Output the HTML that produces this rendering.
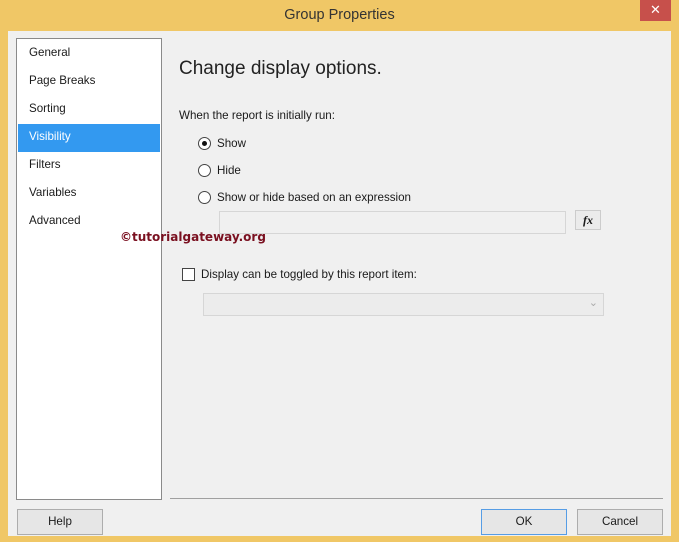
<!DOCTYPE html><html><head><style>
body{margin:0;width:679px;height:542px;background:#f0c766;font-family:"Liberation Sans",sans-serif;position:relative;overflow:hidden;font-size:11.6px;color:#1a1a1a}
div{position:absolute;box-sizing:border-box}
.t{white-space:nowrap}
.btn{background:#e6e6e6;border:1px solid #adadad;text-align:center;line-height:24px;font-size:11.6px}
.rad{width:13px;height:13px;border:1px solid #444;border-radius:50%;background:#fff}
</style></head><body>
<div class="t" style="left:0;top:7px;width:679px;text-align:center;font-size:14.5px;color:#333">Group Properties</div>
<div style="left:640px;top:0;width:31px;height:21px;background:#c7504b;color:#fff;text-align:center;font-size:13px;line-height:20px">✕</div>
<div style="left:8px;top:31px;width:663px;height:505px;background:#f0f0f0"></div>
<div style="left:16px;top:38px;width:146px;height:462px;background:#fff;border:1px solid #8a8a8a"></div>
<div style="left:18px;top:124px;width:142px;height:28px;background:#3399f0"></div>
<div class="t" style="left:29px;top:46px">General</div>
<div class="t" style="left:29px;top:74px">Page Breaks</div>
<div class="t" style="left:29px;top:102px">Sorting</div>
<div class="t" style="left:29px;top:130px;color:#fff">Visibility</div>
<div class="t" style="left:29px;top:158px">Filters</div>
<div class="t" style="left:29px;top:186px">Variables</div>
<div class="t" style="left:29px;top:214px">Advanced</div>
<div class="t" style="left:179px;top:58px;font-size:19px;color:#222">Change display options.</div>
<div class="t" style="left:179px;top:109px">When the report is initially run:</div>
<div class="rad" style="left:198px;top:137px"><div style="left:3px;top:3px;width:5px;height:5px;border-radius:50%;background:#111"></div></div>
<div class="t" style="left:217px;top:137px">Show</div>
<div class="rad" style="left:198px;top:164px"></div>
<div class="t" style="left:217px;top:164px">Hide</div>
<div class="rad" style="left:198px;top:191px"></div>
<div class="t" style="left:217px;top:191px">Show or hide based on an expression</div>
<div style="left:219px;top:211px;width:347px;height:23px;border:1px solid #d6d6d6;background:#f0f0f0"></div>
<div style="left:575px;top:210px;width:26px;height:20px;border:1px solid #ccc;background:#ebebeb;font-family:'Liberation Serif',serif;font-style:italic;font-weight:bold;text-align:center;line-height:18px;font-size:12px">fx</div>
<div class="t" style="left:120px;top:230px;font-weight:bold;color:#7a1020;font-size:12px;font-family:'DejaVu Sans',sans-serif">©tutorialgateway.org</div>
<div style="left:182px;top:268px;width:13px;height:13px;border:1px solid #444;background:#fff"></div>
<div class="t" style="left:201px;top:268px">Display can be toggled by this report item:</div>
<div style="left:203px;top:293px;width:401px;height:23px;border:1px solid #d6d6d6;background:#ececec"><div style="right:5px;top:2px;color:#aaa;font-size:11px">⌄</div></div>
<div style="left:170px;top:498px;width:493px;height:1px;background:#a0a0a0"></div>
<div class="btn" style="left:17px;top:509px;width:86px;height:26px">Help</div>
<div class="btn" style="left:481px;top:509px;width:86px;height:26px;border-color:#569de5">OK</div>
<div class="btn" style="left:577px;top:509px;width:86px;height:26px">Cancel</div>
</body></html>
